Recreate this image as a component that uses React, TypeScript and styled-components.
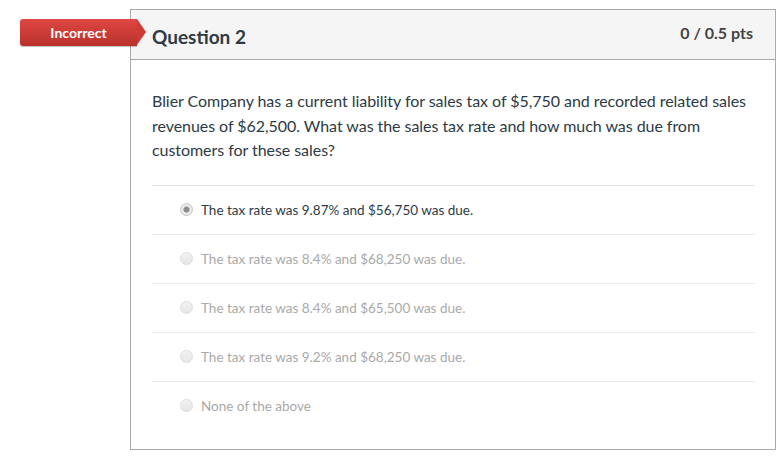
import React from "react";
import styled, { createGlobalStyle } from "styled-components";

const GlobalStyle = createGlobalStyle`
  html, body {
    margin: 0;
    padding: 0;
    background: #ffffff;
    font-family: Lato, "Open Sans", sans-serif;
  }
`;

const Page = styled.div`
  padding: 9px 0 0 130px;
  width: 781px;
  height: 459px;
  box-sizing: border-box;
`;

const Card = styled.div`
  position: relative;
  width: 646px;
  border: 1px solid #aaaaaa;
  box-sizing: border-box;
  color: #2d3b45;
`;

const Badge = styled.div`
  position: absolute;
  left: -111px;
  top: 9px;
  width: 117px;
  height: 27px;
  box-sizing: border-box;
  display: flex;
  align-items: center;
  justify-content: center;
  color: #ffffff;
  font-size: 14px;
  font-weight: 700;
  background: linear-gradient(#df4743, #b9302b);
  border-radius: 3px 0 0 3px;
  box-shadow: 0 1px 1px rgba(0, 0, 0, 0.25);

  &::after {
    content: "";
    position: absolute;
    right: -9px;
    top: 0;
    border-top: 13.5px solid transparent;
    border-bottom: 13.5px solid transparent;
    border-left: 9px solid #cc3b36;
  }
`;

const Header = styled.div`
  height: 49px;
  background: #f5f5f5;
  border-bottom: 1px solid #aaaaaa;
  display: flex;
  justify-content: space-between;
  padding: 0 22px 0 21px;
`;

const Title = styled.div`
  font-size: 19px;
  font-weight: 700;
  padding-top: 15px;
`;

const Points = styled.div`
  font-size: 16px;
  font-weight: 700;
  color: #444444;
  padding-top: 13px;
`;

const Body = styled.div`
  padding: 29px 20px 19px 21px;
`;

const Prompt = styled.p`
  margin: 0 0 22px;
  font-size: 16px;
  line-height: 24.5px;
  letter-spacing: -0.05px;
`;

const Answers = styled.div`
  border-top: 1px solid #e5e5e5;
`;

const Answer = styled.div<{ $last?: boolean }>`
  height: 48px;
  display: flex;
  align-items: center;
  padding-left: 28px;
  gap: 8px;
  border-bottom: ${(p) => (p.$last ? "none" : "1px solid #ececec")};
`;

const Radio = styled.span<{ $checked?: boolean }>`
  width: 11px;
  height: 11px;
  border-radius: 50%;
  border: 1px solid ${(p) => (p.$checked ? "#c4c4c4" : "#dddddd")};
  background: ${(p) =>
    p.$checked
      ? "radial-gradient(circle, #8c8c8c 0 2.5px, #e8e8e8 3.5px, #f4f4f4 100%)"
      : "linear-gradient(#f2f2f2, #e6e6e6)"};
  flex: none;
`;

const Label = styled.span<{ $dim?: boolean }>`
  font-size: 13.5px;
  color: ${(p) => (p.$dim ? "#a9a9a9" : "#2d3b45")};
`;

const answers = [
  "The tax rate was 9.87% and $56,750 was due.",
  "The tax rate was 8.4% and $68,250 was due.",
  "The tax rate was 8.4% and $65,500 was due.",
  "The tax rate was 9.2% and $68,250 was due.",
  "None of the above",
];

export default function App() {
  return (
    <Page>
      <GlobalStyle />
      <Card>
        <Badge>Incorrect</Badge>
        <Header>
          <Title>Question 2</Title>
          <Points>0 / 0.5 pts</Points>
        </Header>
        <Body>
          <Prompt>
            Blier Company has a current liability for sales tax of $5,750 and
            recorded related sales revenues of $62,500. What was the sales tax
            rate and how much was due from customers for these sales?
          </Prompt>
          <Answers>
            {answers.map((a, i) => (
              <Answer key={a} $last={i === answers.length - 1}>
                <Radio $checked={i === 0} />
                <Label $dim={i !== 0}>{a}</Label>
              </Answer>
            ))}
          </Answers>
        </Body>
      </Card>
    </Page>
  );
}
